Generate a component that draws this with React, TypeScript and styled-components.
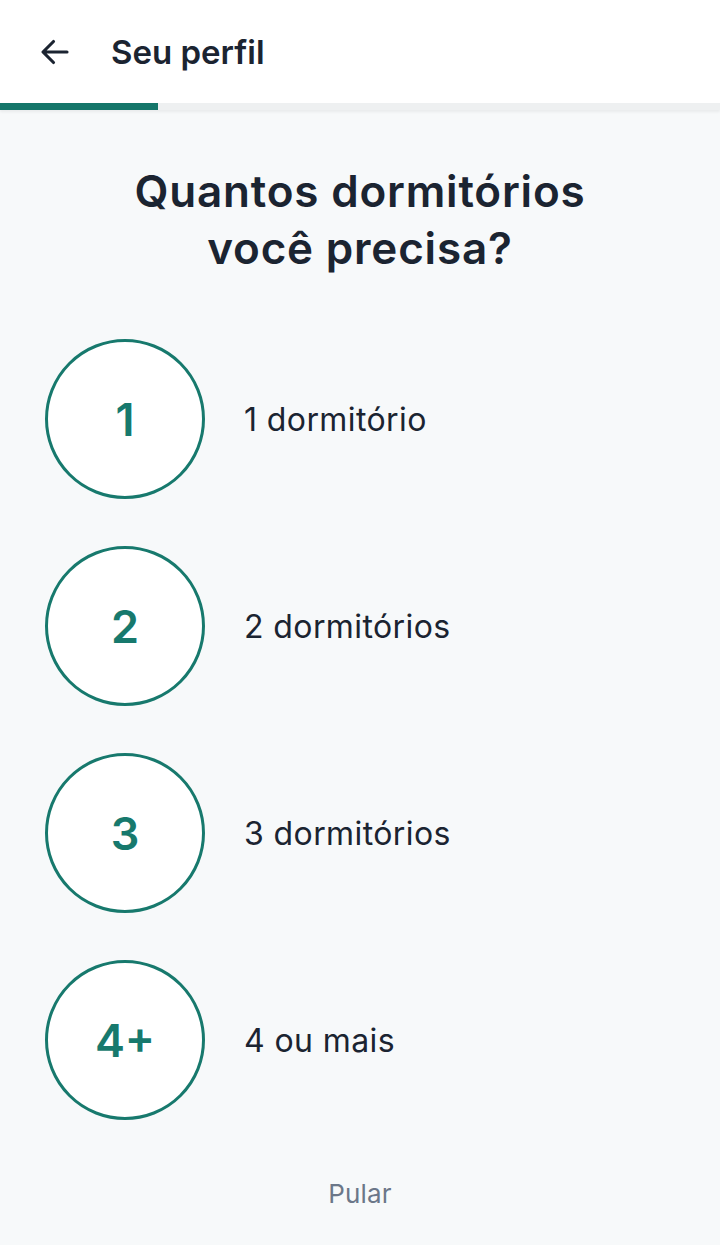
import styled, { createGlobalStyle } from "styled-components";

const GlobalStyle = createGlobalStyle`
  html, body {
    margin: 0;
    padding: 0;
    background: #f7f9fa;
  }
  body {
    font-family: "Inter", "Liberation Sans", sans-serif;
    color: #1b2431;
  }
`;

const options = [
  { value: "1", label: "1 dormitório" },
  { value: "2", label: "2 dormitórios" },
  { value: "3", label: "3 dormitórios" },
  { value: "4+", label: "4 ou mais" },
];

const App = () => {
  return (
    <Page>
      <GlobalStyle />
      <Header>
        <BackButton aria-label="Voltar">
          <svg width="36" height="36" viewBox="0 0 24 24" fill="none">
            <path
              d="M20 12H4.5M11 5l-7 7 7 7"
              stroke="#1b2431"
              strokeWidth="2.1"
              strokeLinecap="round"
              strokeLinejoin="round"
            />
          </svg>
        </BackButton>
        <HeaderTitle>Seu perfil</HeaderTitle>
      </Header>
      <Progress>
        <ProgressFill $percent={22} />
      </Progress>
      <Content>
        <Title>
          Quantos dormitórios
          <br />
          você precisa?
        </Title>
        <OptionList>
          {options.map((o) => (
            <Option key={o.value}>
              <Circle>{o.value}</Circle>
              <OptionLabel>{o.label}</OptionLabel>
            </Option>
          ))}
        </OptionList>
        <SkipButton>Pular</SkipButton>
      </Content>
    </Page>
  );
};

export default App;

const Page = styled.div`
  min-height: 1245px;
  background: #f7f9fa;
`;

const Header = styled.header`
  height: 103px;
  background: #ffffff;
  display: flex;
  align-items: center;
  padding: 0 0 0 37px;
  box-sizing: border-box;
`;

const BackButton = styled.button`
  display: flex;
  align-items: center;
  justify-content: center;
  background: none;
  border: none;
  padding: 0;
  margin-right: 38px;
  cursor: pointer;
`;

const HeaderTitle = styled.h1`
  margin: 0;
  font-size: 33px;
  font-weight: 600;
  letter-spacing: 0;
  color: #1b2431;
`;

const Progress = styled.div`
  height: 7px;
  background: #eef0f1;
  box-shadow: 0 2px 3px rgba(0, 0, 0, 0.06);
`;

const ProgressFill = styled.div<{ $percent: number }>`
  height: 100%;
  width: ${(p) => p.$percent}%;
  background: #15766a;
`;

const Content = styled.main`
  display: flex;
  flex-direction: column;
  align-items: center;
  padding-top: 53px;
`;

const Title = styled.h2`
  margin: 0;
  font-size: 44px;
  line-height: 57px;
  font-weight: 600;
  letter-spacing: 0.8px;
  text-align: center;
  color: #1b2431;
`;

const OptionList = styled.ul`
  list-style: none;
  margin: 0;
  padding: 0 0 0 45px;
  align-self: stretch;
  display: flex;
  flex-direction: column;
  gap: 47px;
  margin-top: 62px;
`;

const Option = styled.li`
  display: flex;
  align-items: center;
  gap: 39px;
  cursor: pointer;
`;

const Circle = styled.div`
  width: 160px;
  height: 160px;
  box-sizing: border-box;
  border-radius: 50%;
  border: 3px solid #17796d;
  background: #ffffff;
  display: flex;
  align-items: center;
  justify-content: center;
  font-size: 45px;
  font-weight: 600;
  color: #17796d;
`;

const OptionLabel = styled.span`
  font-size: 32px;
  font-weight: 400;
  letter-spacing: 0.4px;
  color: #1b2431;
`;

const SkipButton = styled.button`
  margin-top: 50px;
  background: none;
  border: none;
  padding: 8px 16px;
  font-family: "Inter", "Liberation Sans", sans-serif;
  font-size: 26px;
  letter-spacing: 0.2px;
  color: #6b7789;
  cursor: pointer;
`;
